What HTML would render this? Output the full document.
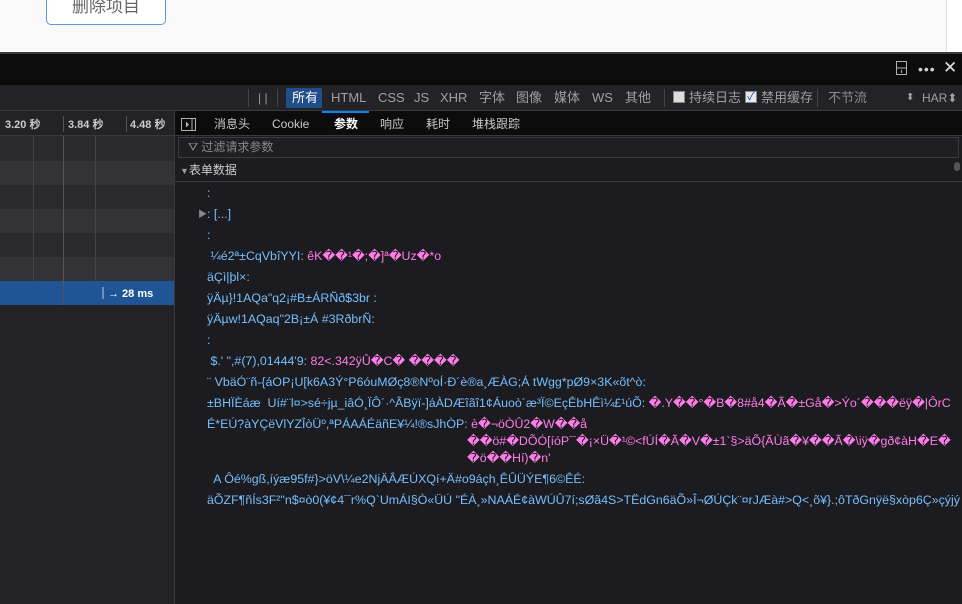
<!DOCTYPE html>
<html><head><meta charset="utf-8"><style>
*{margin:0;padding:0;box-sizing:border-box}
body{width:962px;height:604px;overflow:hidden;background:#1c1b1f;font-family:"Liberation Sans","Noto Sans CJK SC",sans-serif;font-size:12px;color:#b1b1b3;position:relative}
.abs{position:absolute;white-space:nowrap;line-height:16px}
.k{color:#75bfff}.v{color:#ff7de9}
.ln{position:absolute;left:0;white-space:nowrap;font-size:12.4px;line-height:16px}
</style></head><body>
<div class="abs" style="left:0;top:0;width:962px;height:52px;background:#f9f9fa"></div>
<div class="abs" style="left:946px;top:0;width:16px;height:52px;background:#fff;border-left:1px solid #ddd"></div>
<div class="abs" style="left:46px;top:-10px;width:120px;height:35px;border:1px solid #5a9ad8;border-radius:5px;background:#fff;color:#666;font-size:17px;text-align:center;line-height:31px">删除项目</div>
<div class="abs" style="left:0;top:52px;width:962px;height:33px;background:#0c0c0d;border-top:2px solid #38383d"></div>
<svg class="abs" style="left:896px;top:61px" width="12" height="14"><rect x="0.5" y="0.5" width="10" height="13" fill="none" stroke="#b1b1b3"/><line x1="0" y1="7" x2="11" y2="7" stroke="#b1b1b3"/><line x1="5.5" y1="9" x2="5.5" y2="12" stroke="#b1b1b3"/></svg>
<div class="abs" style="left:918px;top:61px;color:#d0d0d0;font-size:14px;letter-spacing:1px">•••</div>
<div class="abs" style="left:943px;top:60px;color:#e0e0e0;font-size:17px">✕</div>
<div class="abs" style="left:0;top:85px;width:962px;height:26px;background:#232327;border-bottom:1px solid #38383d"></div>
<div class="abs" style="left:248px;top:89px;width:1px;height:18px;background:#444"></div>
<div class="abs" style="left:258px;top:90px;color:#999">| |</div>
<div class="abs" style="left:277px;top:89px;width:1px;height:18px;background:#444"></div>
<div class="abs" style="left:286px;top:88px;width:36px;height:20px;background:#204e8a;border-radius:2px"></div>
<div class="abs" style="left:292px;top:90px;color:#fff;font-size:13px">所有</div>
<div class="abs" style="left:331px;top:90px;color:#a0a0a3;font-size:13px">HTML</div>
<div class="abs" style="left:378px;top:90px;color:#a0a0a3;font-size:13px">CSS</div>
<div class="abs" style="left:414px;top:90px;color:#a0a0a3;font-size:13px">JS</div>
<div class="abs" style="left:440px;top:90px;color:#a0a0a3;font-size:13px">XHR</div>
<div class="abs" style="left:479px;top:90px;color:#a0a0a3;font-size:13px">字体</div>
<div class="abs" style="left:516px;top:90px;color:#a0a0a3;font-size:13px">图像</div>
<div class="abs" style="left:554px;top:90px;color:#a0a0a3;font-size:13px">媒体</div>
<div class="abs" style="left:592px;top:90px;color:#a0a0a3;font-size:13px">WS</div>
<div class="abs" style="left:625px;top:90px;color:#a0a0a3;font-size:13px">其他</div>
<div class="abs" style="left:664px;top:89px;width:1px;height:18px;background:#444"></div>
<div class="abs" style="left:673px;top:91px;width:12px;height:12px;background:#ddd;border:1px solid #888"></div>
<div class="abs" style="left:689px;top:90px;color:#a0a0a3;font-size:13px">持续日志</div>
<div class="abs" style="left:745px;top:91px;width:12px;height:12px;background:#e8e8ee;border:1px solid #888;color:#2050a0;font-size:11px;line-height:10px;text-align:center">✓</div>
<div class="abs" style="left:761px;top:90px;color:#a0a0a3;font-size:13px">禁用缓存</div>
<div class="abs" style="left:817px;top:89px;width:1px;height:18px;background:#444"></div>
<div class="abs" style="left:828px;top:90px;color:#8a8a8d;font-size:13px">不节流</div>
<div class="abs" style="left:906px;top:90px;color:#a0a0a3;font-size:10px">⬍</div>
<div class="abs" style="left:922px;top:90px;color:#a0a0a3;font-size:12px">HAR⬍</div>
<!-- left panel -->
<div class="abs" style="left:0;top:111px;width:175px;height:25px;background:#232327;border-bottom:1px solid #38383d"></div>
<div class="abs" style="left:5px;top:117px;color:#ccc;font-size:11px;font-weight:bold">3.20 秒</div>
<div class="abs" style="left:68px;top:117px;color:#ccc;font-size:11px;font-weight:bold">3.84 秒</div>
<div class="abs" style="left:130px;top:117px;color:#ccc;font-size:11px;font-weight:bold">4.48 秒</div>
<div class="abs" style="left:63px;top:116px;width:1px;height:16px;background:#555"></div>
<div class="abs" style="left:126px;top:116px;width:1px;height:16px;background:#555"></div>
<div class="abs" style="left:0;top:136px;width:175px;height:25px;background:#2a2a2e"></div>
<div class="abs" style="left:0;top:161px;width:175px;height:24px;background:#333337"></div>
<div class="abs" style="left:0;top:185px;width:175px;height:24px;background:#2a2a2e"></div>
<div class="abs" style="left:0;top:209px;width:175px;height:24px;background:#333337"></div>
<div class="abs" style="left:0;top:233px;width:175px;height:24px;background:#2a2a2e"></div>
<div class="abs" style="left:0;top:257px;width:175px;height:24px;background:#333337"></div>
<div class="abs" style="left:0;top:281px;width:175px;height:24px;background:#1f5495"></div>
<div class="abs" style="left:0;top:305px;width:175px;height:299px;background:#232327"></div>
<div class="abs" style="left:33px;top:136px;width:1px;height:145px;background:#444"></div>
<div class="abs" style="left:63px;top:136px;width:1px;height:169px;background:#555"></div>
<div class="abs" style="left:95px;top:136px;width:1px;height:145px;background:#444"></div>
<div class="abs" style="left:102px;top:287px;width:2px;height:12px;background:#6a8fc0"></div>
<div class="abs" style="left:108px;top:286px;color:#fff;font-size:11px;font-weight:bold">→ 28 ms</div>
<div class="abs" style="left:174px;top:111px;width:1px;height:493px;background:#38383d"></div>
<!-- tabs -->
<div class="abs" style="left:175px;top:111px;width:787px;height:25px;background:#0c0c0d;border-bottom:1px solid #38383d"></div>
<div class="abs" style="left:322px;top:111px;width:47px;height:2px;background:#0a84ff"></div>
<svg class="abs" style="left:181px;top:118px" width="15" height="13"><rect x="0.5" y="0.5" width="14" height="12" fill="none" stroke="#b1b1b3"/><line x1="11" y1="1" x2="11" y2="12" stroke="#b1b1b3"/><path d="M5 3.5 L8 6.5 L5 9.5Z" fill="#b1b1b3"/></svg>
<div class="abs" style="left:214px;top:116px;color:#c8c8ca;font-size:12px">消息头</div>
<div class="abs" style="left:272px;top:116px;color:#c8c8ca;font-size:12px">Cookie</div>
<div class="abs" style="left:334px;top:116px;color:#fff;font-size:12px;font-weight:bold">参数</div>
<div class="abs" style="left:380px;top:116px;color:#c8c8ca;font-size:12px">响应</div>
<div class="abs" style="left:426px;top:116px;color:#c8c8ca;font-size:12px">耗时</div>
<div class="abs" style="left:472px;top:116px;color:#c8c8ca;font-size:12px">堆栈跟踪</div>
<div class="abs" style="left:178px;top:137px;width:781px;height:21px;background:#1f1f23;border:1px solid #3a3a3f"></div>
<div class="abs" style="left:188px;top:139px;color:#8a8a8d;font-size:12px">⛛ 过滤请求参数</div>
<div class="abs" style="left:175px;top:159px;width:787px;height:23px;border-bottom:1px solid #38383d"></div>
<div class="abs" style="left:180px;top:162px;color:#ccc;font-size:12px"><span style="font-size:9px;color:#999">▼</span>表单数据</div>
<div class="abs" style="left:954px;top:162px;width:6px;height:9px;background:#555;border-radius:3px"></div>
<!-- content -->
<div class="abs" style="left:198px;top:206px;color:#888;font-size:9px">▶</div>
<div class="abs" style="left:207px;top:0;width:760px">
<div class="ln k" style="top:185px">:</div>
<div class="ln k" style="top:206px">: [...]</div>
<div class="ln k" style="top:227px">:</div>
<div class="ln" style="top:248px"><span class="k">&nbsp;¼é2ª±CqVbîYYI: </span><span class="v">êK��¹�;�]ª�Uz�*o</span></div>
<div class="ln k" style="top:269px">äÇì|þl×:</div>
<div class="ln k" style="top:290px">ÿÄµ}!1AQa"q2¡#B±ÁRÑð$3br :</div>
<div class="ln k" style="top:311px">ÿÄµw!1AQaq"2B¡±Á #3RðbrÑ:</div>
<div class="ln k" style="top:332px">:</div>
<div class="ln" style="top:353px"><span class="k">&nbsp;$.' ",#(7),01444'9: </span><span class="v">82&lt;.342ÿÛ�C� ����</span></div>
<div class="ln k" style="top:374px">¨ VbäÓ¨ñ-{áOP¡U[k6A3Ý°P6óuMØç8®NºoÍ·Ð´è®a¸ÆÀG;Á tWgg*pØ9×3K«õt^ò:</div>
<div class="ln" style="top:395px"><span class="k">±BHÏÈáæ&nbsp; Uí#¨l¤&gt;sé÷jµ_iâÓ¸ÏÔ´·^ÂBÿï-]áÀDÆîãî1¢Áuoò´æ³Ï©EçÊbHÊì¼£¹úÕ: </span><span class="v">�.Y��°�B�8#å4�Ã�±Gå�&gt;Ýo´���ëÿ�|ÔrC</span></div>
<div class="ln" style="top:416px"><span class="k">É*EÚ?àYÇëVlYZÎòÜº,ªPÁAÁÉäñE¥¼!®sJhÒP: </span><span class="v">è�¬öÒÛ2�W��å</span></div>
<div class="ln v" style="top:433px;left:260px">��ö#�DÕÓ[íóP¯�¡×Ü�¹©&lt;fÚÍ�Ã�V�±1`§&gt;äÕ{ÃÙã�¥��Ã�\iÿ�gð¢àH�E�</div>
<div class="ln v" style="top:450px;left:260px">�ö��Hí)�n'</div>
<div class="ln k" style="top:471px">&nbsp; A Ôé%gß,íýæ95f#}&gt;öV\¼e2NjÄÂÆÚXQí+Ä#o9áçh¸ÊÛÜÝE¶6©ÊÉ:</div>
<div class="ln k" style="top:492px">äÕZF¶ñÍs3F²"n$¤ò0(¥¢4¯r%Q`UmÁI§Ò«ÜÚ "ÉÀ¸»NAÁÉ¢àWÚÛ7í;sØã4S&gt;TËdGn6äÕ»Î¬ØÚÇk¨¤rJÆà#&gt;Q&lt;¸õ¥}.;ôTðGnÿë§xòp6Ç»çýjý</div>
</div>
</body></html>
